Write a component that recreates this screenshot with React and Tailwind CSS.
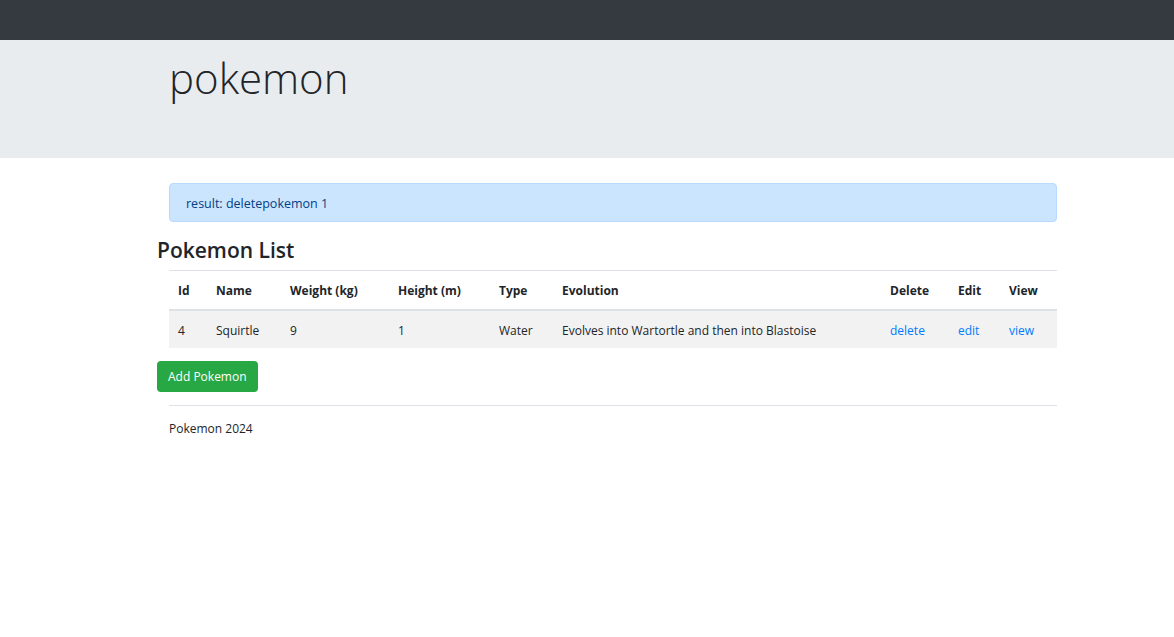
import React from 'react';

const font = { fontFamily: '"Open Sans", "Noto Sans", sans-serif' };

const cols = [
    { label: 'Id', w: 'w-[38px]' },
    { label: 'Name', w: 'w-[74px]' },
    { label: 'Weight (kg)', w: 'w-[108px]' },
    { label: 'Height (m)', w: 'w-[101px]' },
    { label: 'Type', w: 'w-[63px]' },
    { label: 'Evolution', w: 'w-[328px]' },
    { label: 'Delete', w: 'w-[68px]' },
    { label: 'Edit', w: 'w-[51px]' },
    { label: 'View', w: 'w-[57px]' },
];

const pokemons = [
    { id: 4, name: 'Squirtle', weight: 9, height: 1, type: 'Water', evolution: 'Evolves into Wartortle and then into Blastoise' },
];

const App = () => {
    return (
        <div className="min-h-screen bg-white text-[#212529] text-[12px]" style={font}>
            {/* navbar */}
            <div className="h-10 bg-[#343a40]"></div>

            {/* jumbotron */}
            <div className="h-[118px] bg-[#e9ecef] pl-[169px] pt-[8px]">
                <h1 className="text-[42px] font-light leading-[60px] text-[#212529]">pokemon</h1>
            </div>

            <div className="ml-[157px] w-[900px] pt-[25px]">
                <div className="ml-[12px] w-[888px] h-[39px] flex items-center px-[16px] pt-[3px] bg-[#cce5ff] border border-[#b8daff] rounded text-[#004085] text-[12.5px]">
                    result: deletepokemon 1
                </div>

                <h2 className="mt-[12px] text-[21px] font-semibold leading-[32px]">Pokemon List</h2>

                <table className="ml-[12px] mt-[4px] w-[888px] table-fixed border-collapse text-left">
                    <thead>
                        <tr className="border-t border-[#dee2e6] border-b-2">
                            {cols.map(c => (
                                <th key={c.label} className={`${c.w} h-[39px] pl-[9px] pt-[2px] font-bold align-middle`}>{c.label}</th>
                            ))}
                        </tr>
                    </thead>
                    <tbody>
                        {pokemons.map(p => (
                            <tr key={p.id} className="bg-[#f2f2f2] h-[38px]">
                                <td className="pl-[9px] pt-[3px]">{p.id}</td>
                                <td className="pl-[9px] pt-[3px]">{p.name}</td>
                                <td className="pl-[9px] pt-[3px]">{p.weight}</td>
                                <td className="pl-[9px] pt-[3px]">{p.height}</td>
                                <td className="pl-[9px] pt-[3px]">{p.type}</td>
                                <td className="pl-[9px] pt-[3px]">{p.evolution}</td>
                                <td className="pl-[9px] pt-[3px]"><a className="text-[#007bff]">delete</a></td>
                                <td className="pl-[9px] pt-[3px]"><a className="text-[#007bff]">edit</a></td>
                                <td className="pl-[9px] pt-[3px]"><a className="text-[#007bff]">view</a></td>
                            </tr>
                        ))}
                    </tbody>
                </table>

                <button className="mt-[13px] h-[31px] px-[11px] pt-[1px] bg-[#28a745] text-white rounded-[4px]">
                    Add Pokemon
                </button>

                <div className="ml-[12px] w-[888px] mt-[13px] border-t border-[#dee2e6]"></div>

                <p className="ml-[12px] mt-[14px]">Pokemon 2024</p>
            </div>
        </div>
    );
};

export default App;
